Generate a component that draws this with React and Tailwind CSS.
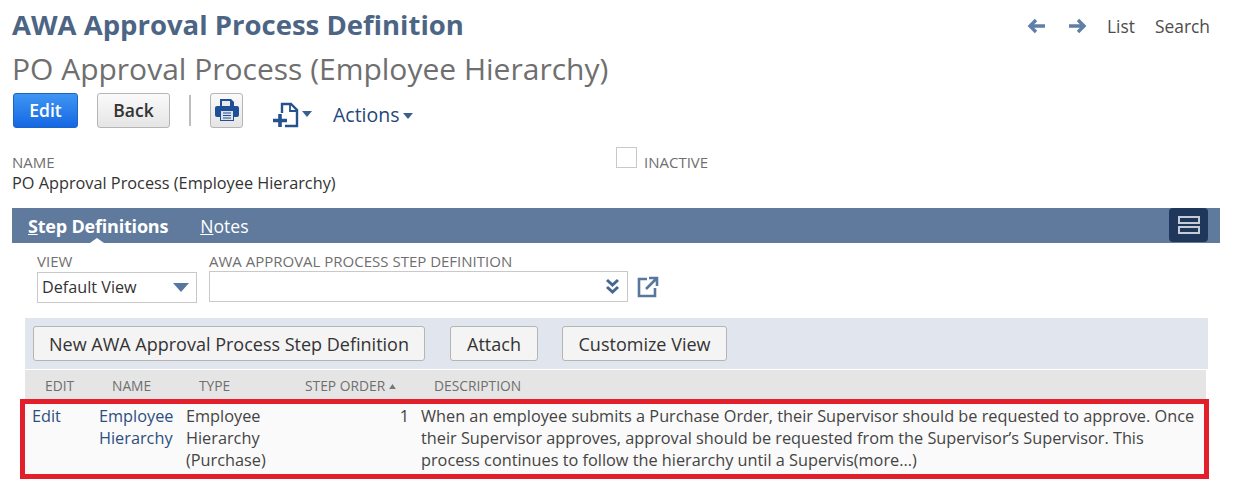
import React from 'react';

const ArrowIcon = ({ flip }) => (
    <svg width="20" height="16" viewBox="0 0 20 16" className={flip ? 'rotate-180' : ''}>
        <path d="M9 2 L3 8 L9 14 M3 8 H18" fill="none" stroke="#5f7fa6" strokeWidth="3.4" />
    </svg>
);

const PrintIcon = () => (
    <svg width="26" height="26" viewBox="0 0 26 26">
        <path d="M6 2 H17 L20 5 V9 H6 Z" fill="#1f4f96" />
        <path d="M8 4 H16 V9 H8 Z" fill="#e9e9e9" />
        <path d="M3 9 H23 Q25 9 25 11 V18 Q25 20 23 20 H20 V24 H6 V20 H3 Q1 20 1 18 V11 Q1 9 3 9 Z" fill="#1f4f96" />
        <path d="M7 14 H19 V23 H7 Z" fill="#dfe3e8" />
        <path d="M9 16 H17 M9 18.5 H17 M9 21 H17" stroke="#1f4f96" strokeWidth="1" />
    </svg>
);

const NewFileIcon = () => (
    <svg width="28" height="26" viewBox="0 0 28 26">
        <path d="M11 11 V2 H20 L26 8 V24 H14" fill="none" stroke="#24528f" strokeWidth="2.4" />
        <path d="M19 2 V9 H26" fill="none" stroke="#24528f" strokeWidth="1.8" />
        <path d="M9 12 V25 M2 18.5 H16" fill="none" stroke="#24528f" strokeWidth="3.6" />
    </svg>
);

const Caret = ({ className }) => (
    <svg width="10" height="6" viewBox="0 0 10 6" className={className}>
        <path d="M0 0 H10 L5 6 Z" fill="#3b5f8f" />
    </svg>
);

const gridCols = 'grid grid-cols-[66px_87px_119px_116px_1fr]';

export default function App() {
    return (
        <div className="w-[1241px] h-[490px] bg-white overflow-hidden font-['Open_Sans',sans-serif] text-[#333]">
            <div className="h-[50px] pl-[12px] pr-[31px] flex items-center justify-between">
                <h1 className="text-[27.5px] leading-[48px] font-bold text-[#4d6585] whitespace-nowrap">AWA Approval Process Definition</h1>
                <div className="flex items-center mt-[3px] text-[17.4px] text-[#4d4d4d]">
                    <ArrowIcon />
                    <span className="ml-[20px]"><ArrowIcon flip /></span>
                    <a className="ml-[20px]">List</a>
                    <a className="ml-[20px]">Search</a>
                </div>
            </div>

            <h2 className="h-[38px] pl-[12px] text-[30px] leading-[38px] text-[#6f6f6f] whitespace-nowrap">PO Approval Process (Employee Hierarchy)</h2>

            <div className="mt-[5px] h-[35px] pl-[13px] flex items-center">
                <button className="w-[65px] h-[35px] rounded-[3px] border border-[#1b65c4] bg-gradient-to-b from-[#3f95f3] to-[#1467e2] text-white text-[17.5px] font-semibold">Edit</button>
                <button className="ml-[19px] w-[73px] h-[35px] rounded-[3px] border border-[#b5b5b5] bg-gradient-to-b from-[#fafafa] to-[#e5e5e5] text-[#333] text-[17.5px] font-semibold">Back</button>
                <div className="ml-[19px] w-[2px] h-[31px] bg-[#bdbdbd]" />
                <button className="ml-[19px] w-[33px] h-[35px] rounded-[3px] border border-[#b5b5b5] bg-gradient-to-b from-[#fafafa] to-[#e5e5e5] flex items-start justify-center pt-[3px]">
                    <PrintIcon />
                </button>
                <div className="ml-[28px] flex items-center mt-[9px]">
                    <NewFileIcon />
                    <Caret className="ml-[3px] mb-[2px]" />
                </div>
                <div className="ml-[21px] flex items-center mt-[9px] text-[19.5px] text-[#24477a]">
                    <span>Actions</span>
                    <Caret className="ml-[3px] mt-[2px]" />
                </div>
            </div>

            <div className="mt-[19px] h-[61px] pl-[12px] flex">
                <div className="w-[604px] pt-[5px]">
                    <div className="text-[15px] leading-[20px] text-[#6f6f6f]">NAME</div>
                    <div className="text-[16.3px] leading-[22px] text-[#333]">PO Approval Process (Employee Hierarchy)</div>
                </div>
                <div className="flex items-start">
                    <div className="w-[21px] h-[21px] border border-[#c9c9c9] bg-white" />
                    <span className="ml-[7px] pt-[5px] text-[15px] leading-[20px] text-[#6f6f6f]">INACTIVE</span>
                </div>
            </div>

            <div className="ml-[12px] w-[1208px] h-[35px] bg-[#5f7a9c] flex items-center justify-between pr-[12px]">
                <div className="flex items-center text-white pl-[16px] pt-[1px]">
                    <span className="relative font-bold text-[18px] leading-[34px] tracking-[-0.2px]">
                        <u>S</u>tep Definitions
                        <span className="absolute left-[62px] bottom-0 w-0 h-0 border-x-[7px] border-x-transparent border-b-[5px] border-b-white" />
                    </span>
                    <span className="ml-[32px] text-[17.6px] leading-[34px]"><u>N</u>otes</span>
                </div>
                <div className="w-[39px] h-[34px] self-start rounded-[4px] bg-[#20375c] flex flex-col items-center justify-center gap-[2px]">
                    <div className="w-[22px] h-[8px] border-2 border-[#c5ccd6]" />
                    <div className="w-[22px] h-[8px] border-2 border-[#c5ccd6]" />
                </div>
            </div>

            <div className="h-[75px] pl-[37px] pt-[9px] flex">
                <div className="w-[160px]">
                    <div className="text-[15px] leading-[18px] text-[#6f6f6f]">VIEW</div>
                    <div className="mt-[2px] h-[31px] border border-[#c9c9c9] flex items-center justify-between pl-[4px] pr-[7px] text-[16.2px] text-[#333]">
                        <span>Default View</span>
                        <svg width="16" height="9" viewBox="0 0 16 9"><path d="M0 0 H16 L8 9 Z" fill="#58779c" /></svg>
                    </div>
                </div>
                <div className="ml-[12px]">
                    <div className="text-[15px] leading-[18px] text-[#6f6f6f]">AWA APPROVAL PROCESS STEP DEFINITION</div>
                    <div className="mt-[1px] flex items-center">
                        <div className="w-[419px] h-[31px] border border-[#c9c9c9] flex items-center justify-end pr-[7px]">
                            <svg width="15" height="17" viewBox="0 0 15 17">
                                <path d="M2 2 L7.5 7 L13 2 M2 9 L7.5 14 L13 9" fill="none" stroke="#47678f" strokeWidth="3" />
                            </svg>
                        </div>
                        <svg width="22" height="22" viewBox="0 0 22 22" className="ml-[9px]">
                            <path d="M10 3 H2 V20 H18 V12" fill="none" stroke="#58779c" strokeWidth="2.6" />
                            <path d="M9 13 L19 3 M12 2 H20 V10" fill="none" stroke="#58779c" strokeWidth="2.6" />
                        </svg>
                    </div>
                </div>
            </div>

            <div className="ml-[25px] w-[1183px] h-[51px] bg-[#e0e5ee] pl-[8px] pt-[8px] flex items-start text-[18px] font-medium text-[#333]">
                <button className="w-[392px] h-[35px] pt-[1px] rounded-[3px] border border-[#b5b5b5] bg-[#f4f4f4]">New AWA Approval Process Step Definition</button>
                <button className="ml-[25px] w-[88px] h-[35px] pt-[1px] rounded-[3px] border border-[#b5b5b5] bg-[#f4f4f4]">Attach</button>
                <button className="ml-[24px] w-[165px] h-[35px] pt-[1px] rounded-[3px] border border-[#b5b5b5] bg-[#f4f4f4]">Customize View</button>
            </div>

            <div className={`ml-[25px] w-[1181px] h-[29px] mt-[1px] bg-[#e5e5e5] items-center text-[13.8px] text-[#6f6f6f] ${gridCols}`}>
                <span className="pl-[20px] pt-[4px]">EDIT</span>
                <span className="pl-[21px] pt-[4px]">NAME</span>
                <span className="pl-[21px] pt-[4px]">TYPE</span>
                <span className="pl-[8px] pt-[4px] flex items-center whitespace-nowrap">STEP ORDER<svg width="7" height="5" viewBox="0 0 8 6" className="ml-[4px]"><path d="M0 6 H8 L4 0 Z" fill="#777" /></svg></span>
                <span className="pl-[21px] pt-[4px]">DESCRIPTION</span>
            </div>

            <div className="ml-[20px] w-[1189px] h-[80px] border-[5px] border-[#e41f2c] bg-[#fafafa] text-[16.3px] leading-[22px] text-[#444]">
                <div className={`pt-[1px] ${gridCols}`}>
                    <a className="pl-[7px] text-[#2b4f80]">Edit</a>
                    <a className="pl-[8px] text-[#2b4f80]">Employee Hierarchy</a>
                    <span className="pl-[8px]">Employee Hierarchy (Purchase)</span>
                    <span className="pr-[4px] text-right">1</span>
                    <span className="pl-[8px] pr-[4px]">When an employee submits a Purchase Order, their Supervisor should be requested to approve. Once their Supervisor approves, approval should be requested from the Supervisor’s Supervisor. This process continues to follow the hierarchy until a Supervis(more...)</span>
                </div>
            </div>
        </div>
    );
}
